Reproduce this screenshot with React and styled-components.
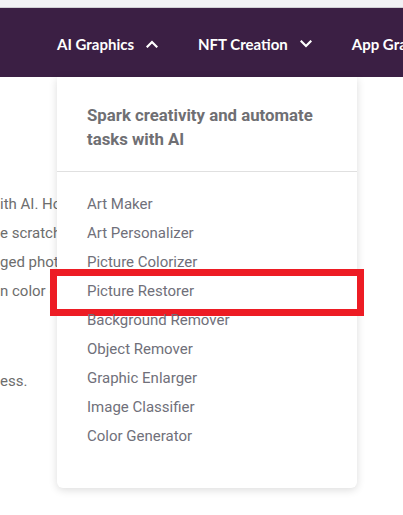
import React from 'react';
import styled, { createGlobalStyle } from 'styled-components';

const GlobalStyle = createGlobalStyle`
  html, body {
    margin: 0;
    padding: 0;
    background: #ffffff;
    overflow: hidden;
  }
  * {
    box-sizing: border-box;
  }
`;

const menuItems = [
  'Art Maker',
  'Art Personalizer',
  'Picture Colorizer',
  'Picture Restorer',
  'Background Remover',
  'Object Remover',
  'Graphic Enlarger',
  'Image Classifier',
  'Color Generator',
];

const navItems = [
  { label: 'AI Graphics', open: true },
  { label: 'NFT Creation', open: false },
  { label: 'App Graphics', open: false },
];

function Chevron({ up }) {
  return (
    <svg width="12" height="8" viewBox="0 0 12 8" fill="none">
      <path
        d={up ? 'M1.5 6.5 L6 2 L10.5 6.5' : 'M1.5 1.5 L6 6 L10.5 1.5'}
        stroke="#ffffff"
        strokeWidth="2.2"
        strokeLinecap="square"
      />
    </svg>
  );
}

function App() {
  return (
    <Page>
      <GlobalStyle />
      <TopStrip />
      <Nav>
        {navItems.map(item => (
          <NavItem key={item.label}>
            <span>{item.label}</span>
            <Chevron up={item.open} />
          </NavItem>
        ))}
      </Nav>
      <Content>
        <Line>ith AI. How to make graphics</Line>
        <Line>e scratch with one click</Line>
        <Line>ged photos and images</Line>
        <Line>n color or black and white</Line>
        <LastLine>ess.</LastLine>
      </Content>
      <Dropdown>
        <DropHeader>
          <Heading>
            Spark creativity and automate
            <br />
            tasks with AI
          </Heading>
        </DropHeader>
        <ItemList>
          {menuItems.map(label => (
            <MenuItem key={label} highlighted={label === 'Picture Restorer'}>
              {label}
            </MenuItem>
          ))}
        </ItemList>
      </Dropdown>
    </Page>
  );
}

const Page = styled.div`
  position: relative;
  width: 403px;
  height: 515px;
  overflow: hidden;
  background: #ffffff;
  font-family: Roboto, 'Liberation Sans', sans-serif;
`;

const TopStrip = styled.div`
  height: 8px;
  background: #f1f1f4;
  border-bottom: 1px solid #cfcfd3;
`;

const Nav = styled.nav`
  height: 69px;
  background: #3b1f44;
  display: flex;
  align-items: center;
  gap: 40px;
  padding-left: 57px;
  white-space: nowrap;
`;

const NavItem = styled.div`
  display: flex;
  align-items: center;
  gap: 12px;
  color: #ffffff;
  font-family: Lato, 'Open Sans', sans-serif;
  font-weight: 700;
  font-size: 15px;
  padding-top: 2px;
`;

const Content = styled.div`
  padding-top: 113px;
  color: #6d6d6d;
  font-size: 15px;
  white-space: nowrap;
`;

const Line = styled.div`
  line-height: 29px;
`;

const LastLine = styled(Line)`
  margin-top: 61px;
`;

const Dropdown = styled.div`
  position: absolute;
  top: 77px;
  left: 57px;
  width: 300px;
  height: 411px;
  background: #ffffff;
  border-radius: 0 0 6px 6px;
  box-shadow: 0 2px 8px rgba(0, 0, 0, 0.14);
`;

const DropHeader = styled.div`
  padding: 26px 30px 20px;
  border-bottom: 1px solid #e0e0e0;
`;

const Heading = styled.div`
  color: #6f6f73;
  font-weight: 700;
  font-size: 16.8px;
  line-height: 24px;
`;

const ItemList = styled.div`
  padding-top: 18px;
`;

const MenuItem = styled.div`
  position: relative;
  padding-left: 30px;
  line-height: 29px;
  font-size: 15px;
  color: #70707a;

  ${({ highlighted }) =>
    highlighted &&
    `
    &::after {
      content: '';
      position: absolute;
      top: -8px;
      bottom: -10px;
      left: -7px;
      right: -7px;
      border: 7.5px solid #ed1c24;
    }
  `}
`;

export default App;
